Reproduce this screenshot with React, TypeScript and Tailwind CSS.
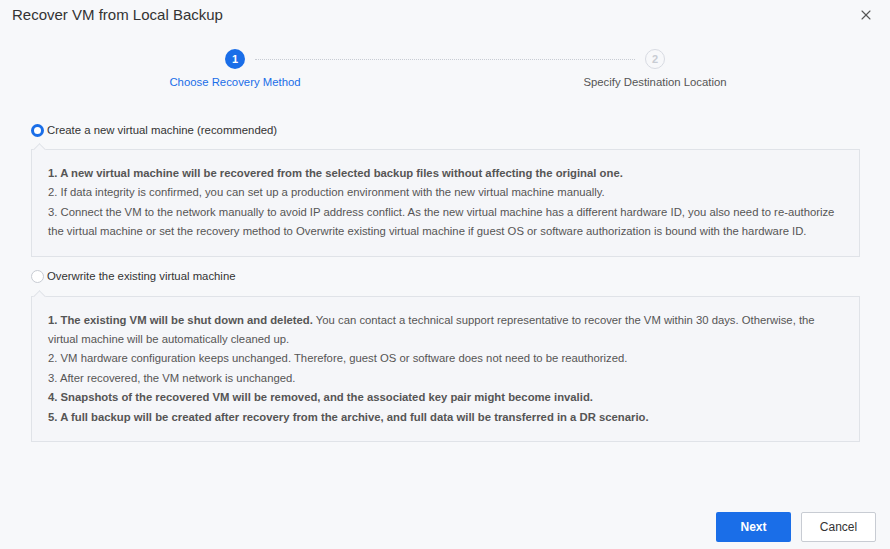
import { X } from "lucide-react";

const font = { fontFamily: '"Liberation Sans", Arial, sans-serif' };

function Radio({ checked }: { checked: boolean }) {
  return checked ? (
    <span className="w-[13px] h-[13px] rounded-full border-[3.5px] border-[#1a6ee8] bg-white shrink-0" />
  ) : (
    <span className="w-[13px] h-[13px] rounded-full border border-[#c8ccd3] bg-white shrink-0" />
  );
}

function Option({
  checked,
  label,
  children,
}: {
  checked: boolean;
  label: string;
  children: React.ReactNode;
}) {
  return (
    <div>
      <label className="flex items-center gap-[3px] h-[14px] text-[11.35px] text-[#333]">
        <Radio checked={checked} />
        <span>{label}</span>
      </label>
      <div className="relative mt-[12px] border border-[#e0e3e8] bg-[#f5f6f9] pl-[16px] pr-[16px] text-[11.3px] leading-[19.4px] text-[#555]">
        <span className="absolute -top-[5px] left-[3px] w-[9px] h-[9px] rotate-45 border-t border-l border-[#e0e3e8] bg-[#f5f6f9]" />
        {children}
      </div>
    </div>
  );
}

export default function App() {
  return (
    <div
      className="w-[890px] h-[549px] bg-[#f7f8fa] flex flex-col"
      style={font}
    >
      <div className="flex items-center justify-between px-[12px] h-[30px]">
        <h1 className="text-[15px] text-[#333]">Recover VM from Local Backup</h1>
        <X className="w-[16px] h-[16px] text-[#555] mr-[4px]" strokeWidth={1.6} />
      </div>

      <div className="flex justify-center mt-[18px]">
        <div className="flex flex-col items-center w-[160px]">
          <span className="w-[20px] h-[20px] rounded-full bg-[#1a6ee8] text-white text-[11px] font-bold flex items-center justify-center mt-[1px]">
            1
          </span>
          <span className="mt-[5px] text-[11.35px] text-[#1a6ee8]">Choose Recovery Method</span>
        </div>
        <div className="w-[380px] mt-[11px] border-t border-dotted border-[#c8ccd3] h-0 -mx-[60px]" />
        <div className="flex flex-col items-center w-[160px]">
          <span className="w-[20px] h-[20px] rounded-full border-[1.5px] border-[#d8dbe2] text-[#c8ccd3] text-[11px] font-bold flex items-center justify-center mt-[1px]">
            2
          </span>
          <span className="mt-[5px] text-[11.35px] text-[#555]">Specify Destination Location</span>
        </div>
      </div>

      <div className="pl-[31px] pr-[30px] mt-[32px] flex flex-col gap-[13px]">
        <Option checked label="Create a new virtual machine (recommended)">
          <div className="pt-[14px] pb-[14px]">
            <p className="font-bold">
              1. A new virtual machine will be recovered from the selected backup files without affecting the original one.
            </p>
            <p>2. If data integrity is confirmed, you can set up a production environment with the new virtual machine manually.</p>
            <p>
              3. Connect the VM to the network manually to avoid IP address conflict. As the new virtual machine has a different hardware ID, you also need to re-authorize the virtual machine or set the recovery method to Overwrite existing virtual machine if guest OS or software authorization is bound with the hardware ID.
            </p>
          </div>
        </Option>
        <Option checked={false} label="Overwrite the existing virtual machine">
          <div className="pt-[14px] pb-[14px]">
            <p>
              <b>1. The existing VM will be shut down and deleted.</b> You can contact a technical support representative to recover the VM within 30 days. Otherwise, the virtual machine will be automatically cleaned up.
            </p>
            <p>2. VM hardware configuration keeps unchanged. Therefore, guest OS or software does not need to be reauthorized.</p>
            <p>3. After recovered, the VM network is unchanged.</p>
            <p className="font-bold">4. Snapshots of the recovered VM will be removed, and the associated key pair might become invalid.</p>
            <p className="font-bold">5. A full backup will be created after recovery from the archive, and full data will be transferred in a DR scenario.</p>
          </div>
        </Option>
      </div>

      <div className="mt-auto mb-[7px] flex justify-end gap-[10px] pr-[14px]">
        <button className="w-[75px] h-[30px] rounded-[2px] bg-[#1a6ee8] text-white text-[12px] font-bold">
          Next
        </button>
        <button className="w-[75px] h-[30px] rounded-[2px] bg-white border border-[#c8ccd3] text-[#333] text-[12px]">
          Cancel
        </button>
      </div>
    </div>
  );
}
